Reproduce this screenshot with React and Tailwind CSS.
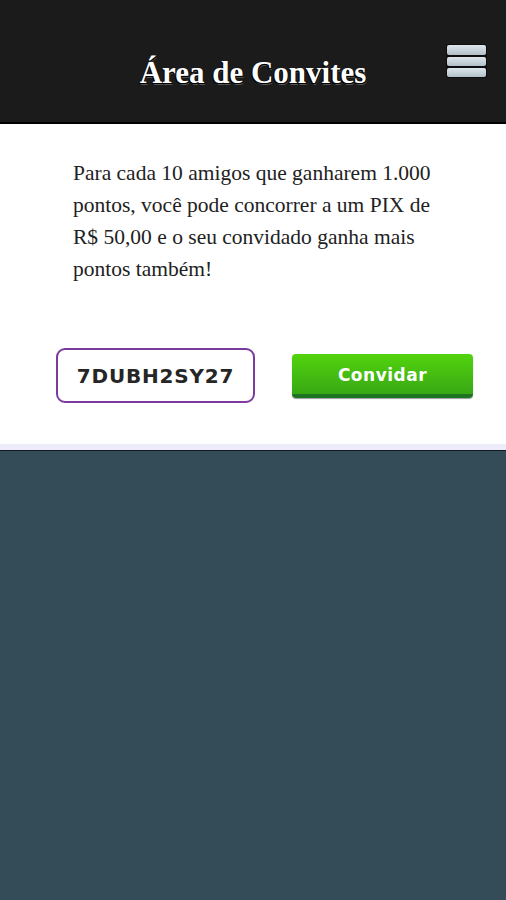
import React from 'react';

const Hamburger = () => (
  <div className="flex flex-col gap-[2px] rounded-[3px] bg-[#0d0d0d] p-[1px]">
    <span className="block h-[10px] w-[39px] rounded-[2px] bg-gradient-to-b from-[#dfe6ec] to-[#b3c0c9]" />
    <span className="block h-[9px] w-[39px] rounded-[2px] bg-gradient-to-b from-[#dfe6ec] to-[#b3c0c9]" />
    <span className="block h-[9px] w-[39px] rounded-[2px] bg-gradient-to-b from-[#dfe6ec] to-[#b3c0c9]" />
  </div>
);

const App = () => {
  return (
    <div className="min-h-[900px] w-full bg-[#344c58]">
      {/* Top bar */}
      <header className="relative flex h-[124px] items-center justify-center bg-[#1b1b1b] border-b-2 border-black">
        <h1
          className="pt-[24px] text-[31px] font-bold text-white [text-shadow:1px_1px_0_#000,-1px_1px_0_#000,1px_2px_0_#555]"
          style={{ fontFamily: '"Liberation Serif", serif' }}
        >
          Área de Convites
        </h1>
        <button className="absolute right-[19px] top-[44px]">
          <Hamburger />
        </button>
      </header>

      {/* Invite card */}
      <section className="bg-white border-b-[6px] border-[#ececfa] shadow-[0_1px_0_#111c22]">
        <p
          className="px-[73px] pt-[33px] text-[21.5px] leading-[32px] text-[#222]"
          style={{ fontFamily: '"Liberation Serif", serif' }}
        >
          Para cada 10 amigos que ganharem 1.000
          <br />
          pontos, você pode concorrer a um PIX de
          <br />
          R$ 50,00 e o seu convidado ganha mais
          <br />
          pontos também!
        </p>

        <div className="flex items-center justify-between pl-[56px] pr-[33px] pt-[63px] pb-[41px]">
          <div className="flex h-[55px] w-[199px] items-center justify-center rounded-[9px] border-2 border-[#7a3a9e] bg-white">
            <span
              className="text-[20px] font-bold tracking-[0.8px] text-[#262626]"
              style={{ fontFamily: '"DejaVu Sans", sans-serif' }}
            >
              7DUBH2SY27
            </span>
          </div>
          <button className="flex h-[44px] w-[181px] items-center justify-center rounded-[4px] border-b-[4px] border-[#1d7420] bg-gradient-to-b from-[#52d40c] to-[#38a814] pt-[4px] shadow-[0_1px_1px_rgba(0,0,0,0.4)]">
            <span
              className="text-[17px] font-bold tracking-[0.5px] text-white"
              style={{ fontFamily: '"DejaVu Sans", sans-serif' }}
            >
              Convidar
            </span>
          </button>
        </div>
      </section>
    </div>
  );
};

export default App;
